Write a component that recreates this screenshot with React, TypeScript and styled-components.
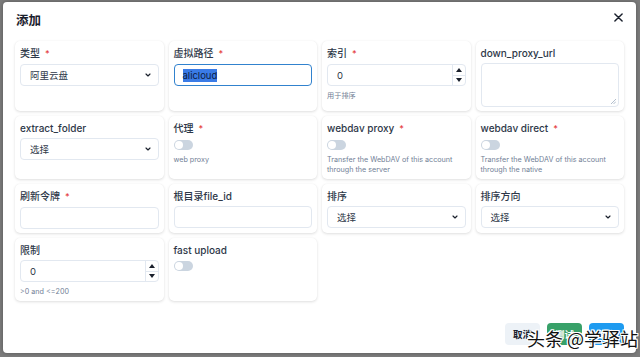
import styled, { createGlobalStyle } from "styled-components";

const GlobalStyle = createGlobalStyle`
  html, body {
    margin: 0;
    padding: 0;
  }
  body {
    font-family: "Inter", "Noto Sans CJK SC", sans-serif;
    color: #2d3748;
  }
`;

const Overlay = styled.div`
  width: 640px;
  height: 357px;
  box-sizing: border-box;
  padding: 2px 4px 4px 3px;
  background: #7c7c7c;
  position: relative;
  overflow: hidden;
`;

const Modal = styled.div`
  height: 100%;
  background: #ffffff;
  border-radius: 4px;
  display: flex;
  flex-direction: column;
  box-shadow: 0 0 4px rgba(0, 0, 0, 0.3);
`;

const Header = styled.div`
  height: 39px;
  display: flex;
  align-items: center;
  justify-content: space-between;
  padding: 0 11px 4px 13px;
  box-sizing: border-box;
`;

const Title = styled.h2`
  margin: 0;
  font-size: 12.5px;
  font-weight: 600;
  color: #1a202c;
`;

const Close = styled.button`
  border: none;
  background: none;
  padding: 0;
  width: 14px;
  height: 14px;
  display: flex;
  align-items: center;
  justify-content: center;
  margin-top: -5px;
`;

const Grid = styled.div`
  display: grid;
  grid-template-columns: repeat(4, 1fr);
  gap: 5px;
  padding: 0 12px 0 12px;
`;

const Card = styled.div`
  background: #fff;
  border-radius: 5px;
  box-shadow: 0 1px 3px rgba(0, 0, 0, 0.13), 0 0 1px rgba(0, 0, 0, 0.06);
  padding: 5px 5px 4px;
  display: flex;
  flex-direction: column;
`;

const Label = styled.div`
  font-size: 10px;
  line-height: 14px;
  font-weight: 500;
  color: #2d3748;
  margin-bottom: 3px;
  white-space: nowrap;
`;

const Star = styled.span`
  color: #e53e3e;
  margin-left: 5px;
  font-size: 9px;
`;

const Field = styled.div<{ $focus?: boolean }>`
  height: 22px;
  box-sizing: border-box;
  border: ${(p) => (p.$focus ? "1.5px solid #3182ce" : "1px solid #e2e8f0")};
  border-radius: 4px;
  display: flex;
  align-items: center;
  padding-left: ${(p) => (p.$focus ? "8px" : "9px")};
  font-size: 9.5px;
  color: #2d3748;
  background: #fff;
`;

const SelectField = styled(Field)`
  justify-content: space-between;
  padding-right: 6px;
`;

const Highlight = styled.span`
  background: #3a7be6;
  color: #0d2044;
  padding: 1px 0;
`;

const NumberField = styled(Field)`
  padding-right: 0;
  justify-content: space-between;
`;

const Spinner = styled.div`
  width: 12px;
  height: 100%;
  border-left: 1px solid #e2e8f0;
  display: flex;
  flex-direction: column;
`;

const SpinHalf = styled.div<{ $top?: boolean }>`
  flex: 1;
  display: flex;
  align-items: center;
  justify-content: center;
  border-bottom: ${(p) => (p.$top ? "1px solid #e2e8f0" : "none")};
`;

const Arrow = styled.div<{ $up?: boolean }>`
  width: 0;
  height: 0;
  border-left: 3.5px solid transparent;
  border-right: 3.5px solid transparent;
  ${(p) =>
    p.$up ? "border-bottom: 4px solid #1a202c;" : "border-top: 4px solid #1a202c;"}
`;

const TextArea = styled.div`
  height: 44px;
  box-sizing: border-box;
  border: 1px solid #e2e8f0;
  border-radius: 4px;
  position: relative;
`;

const Grip = styled.svg`
  position: absolute;
  right: 2px;
  bottom: 2px;
`;

const Helper = styled.div`
  font-size: 7.2px;
  line-height: 10px;
  color: #718096;
  margin-top: 5px;
`;

const Switch = styled.div`
  width: 19px;
  height: 10px;
  border-radius: 5px;
  background: #cbd5e0;
  position: relative;
  margin-top: 1px;
`;

const Knob = styled.div`
  position: absolute;
  left: 1px;
  top: 1px;
  width: 8px;
  height: 8px;
  border-radius: 50%;
  background: #fff;
`;

const Footer = styled.div`
  margin-top: auto;
  display: flex;
  justify-content: flex-end;
  gap: 7px;
  padding: 0 12px 8px;
`;

const Button = styled.button<{ $bg: string; $fg: string }>`
  width: 35px;
  height: 22px;
  border: none;
  border-radius: 4px;
  background: ${(p) => p.$bg};
  color: ${(p) => p.$fg};
  font-family: "Noto Sans CJK SC", sans-serif;
  font-size: 9.5px;
  font-weight: 600;
  padding: 0;
`;

const Watermark = styled.div`
  position: absolute;
  left: 527px;
  top: 326px;
  font-family: "Noto Sans CJK SC", sans-serif;
  font-size: 18px;
  line-height: 24px;
  color: #111;
  white-space: nowrap;
  text-shadow: 1px 0 0 #fff, -1px 0 0 #fff, 0 1px 0 #fff, 0 -1px 0 #fff,
    1px 1px 0 #fff, -1px -1px 0 #fff, 1px -1px 0 #fff, -1px 1px 0 #fff;
`;

function Chevron() {
  return (
    <svg width="8" height="8" viewBox="0 0 24 24" fill="none" stroke="#1a202c" strokeWidth="3.5" strokeLinecap="round" strokeLinejoin="round">
      <path d="M6 9l6 6 6-6" />
    </svg>
  );
}

function Select({ value }: { value: string }) {
  return (
    <SelectField>
      <span>{value}</span>
      <Chevron />
    </SelectField>
  );
}

function NumberInput({ value }: { value: string }) {
  return (
    <NumberField>
      <span>{value}</span>
      <Spinner>
        <SpinHalf $top>
          <Arrow $up />
        </SpinHalf>
        <SpinHalf>
          <Arrow />
        </SpinHalf>
      </Spinner>
    </NumberField>
  );
}

function Toggle() {
  return (
    <Switch>
      <Knob />
    </Switch>
  );
}

function FieldLabel({ text, required }: { text: string; required?: boolean }) {
  return (
    <Label>
      {text}
      {required && <Star>*</Star>}
    </Label>
  );
}

export default function App() {
  return (
    <>
      <GlobalStyle />
      <Overlay>
        <Modal>
          <Header>
            <Title>添加</Title>
            <Close>
              <svg width="9" height="9" viewBox="0 0 10 10" stroke="#1a202c" strokeWidth="1.6" strokeLinecap="round">
                <path d="M1 1l8 8M9 1l-8 8" />
              </svg>
            </Close>
          </Header>
          <Grid>
            <Card>
              <FieldLabel text="类型" required />
              <Select value="阿里云盘" />
            </Card>
            <Card>
              <FieldLabel text="虚拟路径" required />
              <Field $focus>
                <Highlight>alicloud</Highlight>
              </Field>
            </Card>
            <Card>
              <FieldLabel text="索引" required />
              <NumberInput value="0" />
              <Helper>用于排序</Helper>
            </Card>
            <Card>
              <FieldLabel text="down_proxy_url" />
              <TextArea>
                <Grip width="6" height="6" viewBox="0 0 6 6" stroke="#a0aec0" strokeWidth="0.8">
                  <path d="M1 6L6 1M3.5 6L6 3.5" />
                </Grip>
              </TextArea>
            </Card>

            <Card>
              <FieldLabel text="extract_folder" />
              <Select value="选择" />
            </Card>
            <Card>
              <FieldLabel text="代理" required />
              <Toggle />
              <Helper>web proxy</Helper>
            </Card>
            <Card>
              <FieldLabel text="webdav proxy" required />
              <Toggle />
              <Helper>Transfer the WebDAV of this account through the server</Helper>
            </Card>
            <Card>
              <FieldLabel text="webdav direct" required />
              <Toggle />
              <Helper>Transfer the WebDAV of this account through the native</Helper>
            </Card>

            <Card>
              <FieldLabel text="刷新令牌" required />
              <Field />
            </Card>
            <Card>
              <FieldLabel text="根目录file_id" />
              <Field />
            </Card>
            <Card>
              <FieldLabel text="排序" />
              <Select value="选择" />
            </Card>
            <Card>
              <FieldLabel text="排序方向" />
              <Select value="选择" />
            </Card>

            <Card>
              <FieldLabel text="限制" />
              <NumberInput value="0" />
              <Helper>&gt;0 and &lt;=200</Helper>
            </Card>
            <Card>
              <FieldLabel text="fast upload" />
              <Toggle />
            </Card>
          </Grid>
          <Footer>
            <Button $bg="#edf2f7" $fg="#1a202c">取消</Button>
            <Button $bg="#38a169" $fg="#ffffff">测试</Button>
            <Button $bg="#1e9bf0" $fg="#ffffff">确定</Button>
          </Footer>
        </Modal>
        <Watermark>头条 @学驿站</Watermark>
      </Overlay>
    </>
  );
}
